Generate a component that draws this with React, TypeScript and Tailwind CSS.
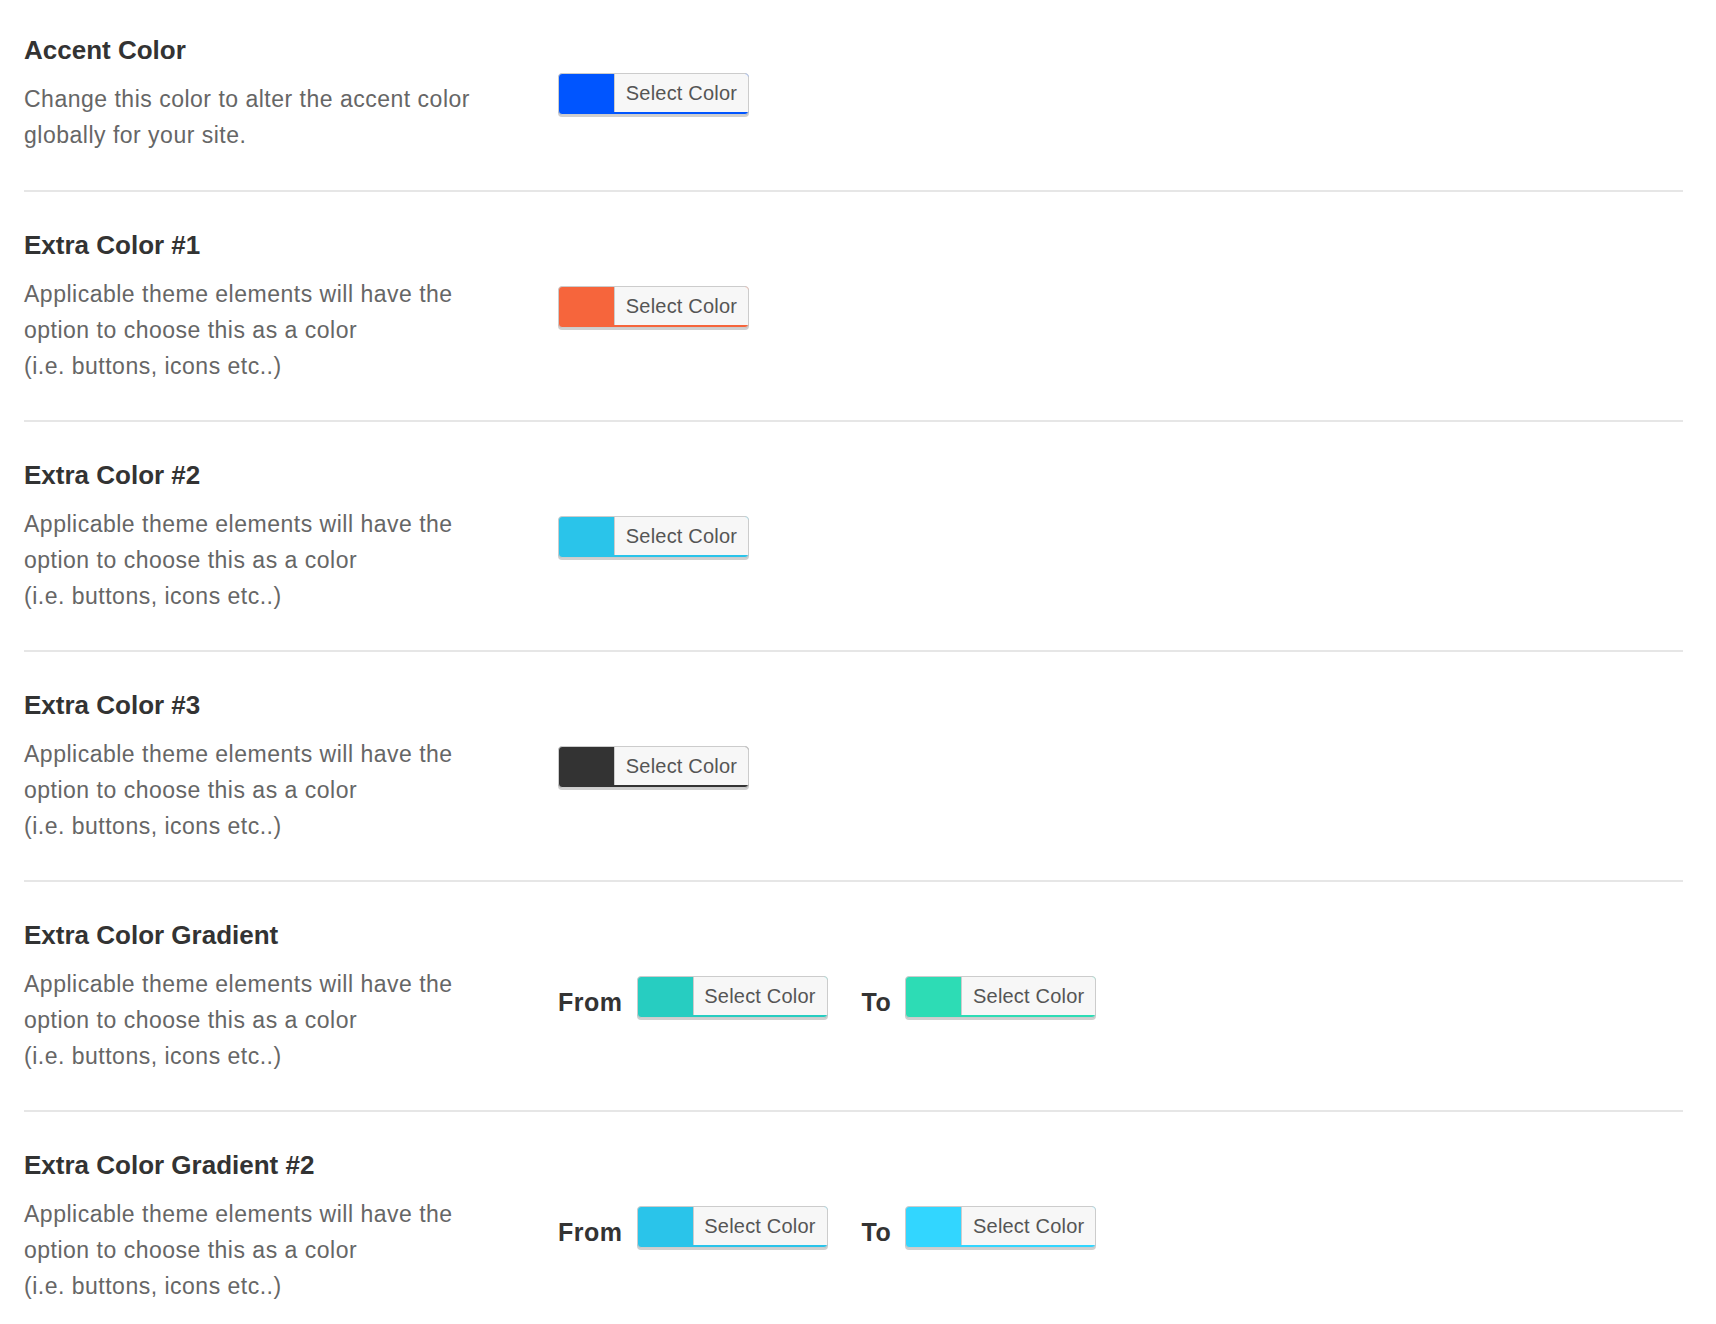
import React from "react";

type Swatch = { bg: string };

type Row = {
  title: string;
  lines: string[];
  kind: "single" | "gradient";
  colors: string[];
};

const GENERIC = [
  "Applicable theme elements will have the",
  "option to choose this as a color",
  "(i.e. buttons, icons etc..)",
];

const rows: Row[] = [
  {
    title: "Accent Color",
    lines: ["Change this color to alter the accent color", "globally for your site."],
    kind: "single",
    colors: ["bg-[#0055ff]"],
  },
  { title: "Extra Color #1", lines: GENERIC, kind: "single", colors: ["bg-[#f6653c]"] },
  { title: "Extra Color #2", lines: GENERIC, kind: "single", colors: ["bg-[#2ac4ea]"] },
  { title: "Extra Color #3", lines: GENERIC, kind: "single", colors: ["bg-[#333333]"] },
  {
    title: "Extra Color Gradient",
    lines: GENERIC,
    kind: "gradient",
    colors: ["bg-[#27cdc1]", "bg-[#2ddcb5]"],
  },
  {
    title: "Extra Color Gradient #2",
    lines: GENERIC,
    kind: "gradient",
    colors: ["bg-[#2ac4ea]", "bg-[#32d6ff]"],
  },
];

function ColorButton({ bg }: Swatch) {
  return (
    <div
      className={`${bg} flex h-[42px] w-[191px] rounded-[4px] border border-[#cccccc] shadow-[0_2px_0_#d0d0d0]`}
    >
      <div className="w-[55px] shrink-0" />
      <div className="mb-[2px] flex flex-1 items-center justify-center rounded-tr-[3px] border-l border-[#cccccc] bg-[#f7f7f7] text-[20px] tracking-[0.2px] text-[#555555]">
        Select Color
      </div>
    </div>
  );
}

function Label({ children }: { children: React.ReactNode }) {
  return (
    <span className="mt-[11px] text-[25px] font-bold leading-[32px] tracking-[0.5px] text-[#333333]">
      {children}
    </span>
  );
}

export default function App() {
  return (
    <div
      className="min-h-[1324px] bg-white"
      style={{ fontFamily: '"Liberation Sans", Arial, sans-serif' }}
    >
      <div className="ml-[24px] w-[1659px]">
        {rows.map((row, i) => (
          <div
            key={row.title}
            className={`flex items-center ${
              i > 0 ? "border-t-2 border-[#e6e6e6] pt-[37px] pb-[36px]" : "pt-[34px] pb-[37px]"
            }`}
          >
            <div className="w-[534px] shrink-0">
              <h2 className="text-[26px] font-bold leading-[32px] text-[#333333]">
                {row.title}
              </h2>
              <p className="mt-[15px] text-[23px] leading-[36px] tracking-[0.5px] text-[#666666]">
                {row.lines.map((l, j) => (
                  <React.Fragment key={j}>
                    {l}
                    {j < row.lines.length - 1 && <br />}
                  </React.Fragment>
                ))}
              </p>
            </div>
            {row.kind === "single" ? (
              <ColorButton bg={row.colors[0]} />
            ) : (
              <div className="flex items-center gap-[34px]">
                <div className="flex items-center gap-[14px]">
                  <Label>From</Label>
                  <ColorButton bg={row.colors[0]} />
                </div>
                <div className="flex items-center gap-[14px]">
                  <Label>To</Label>
                  <ColorButton bg={row.colors[1]} />
                </div>
              </div>
            )}
          </div>
        ))}
      </div>
    </div>
  );
}
